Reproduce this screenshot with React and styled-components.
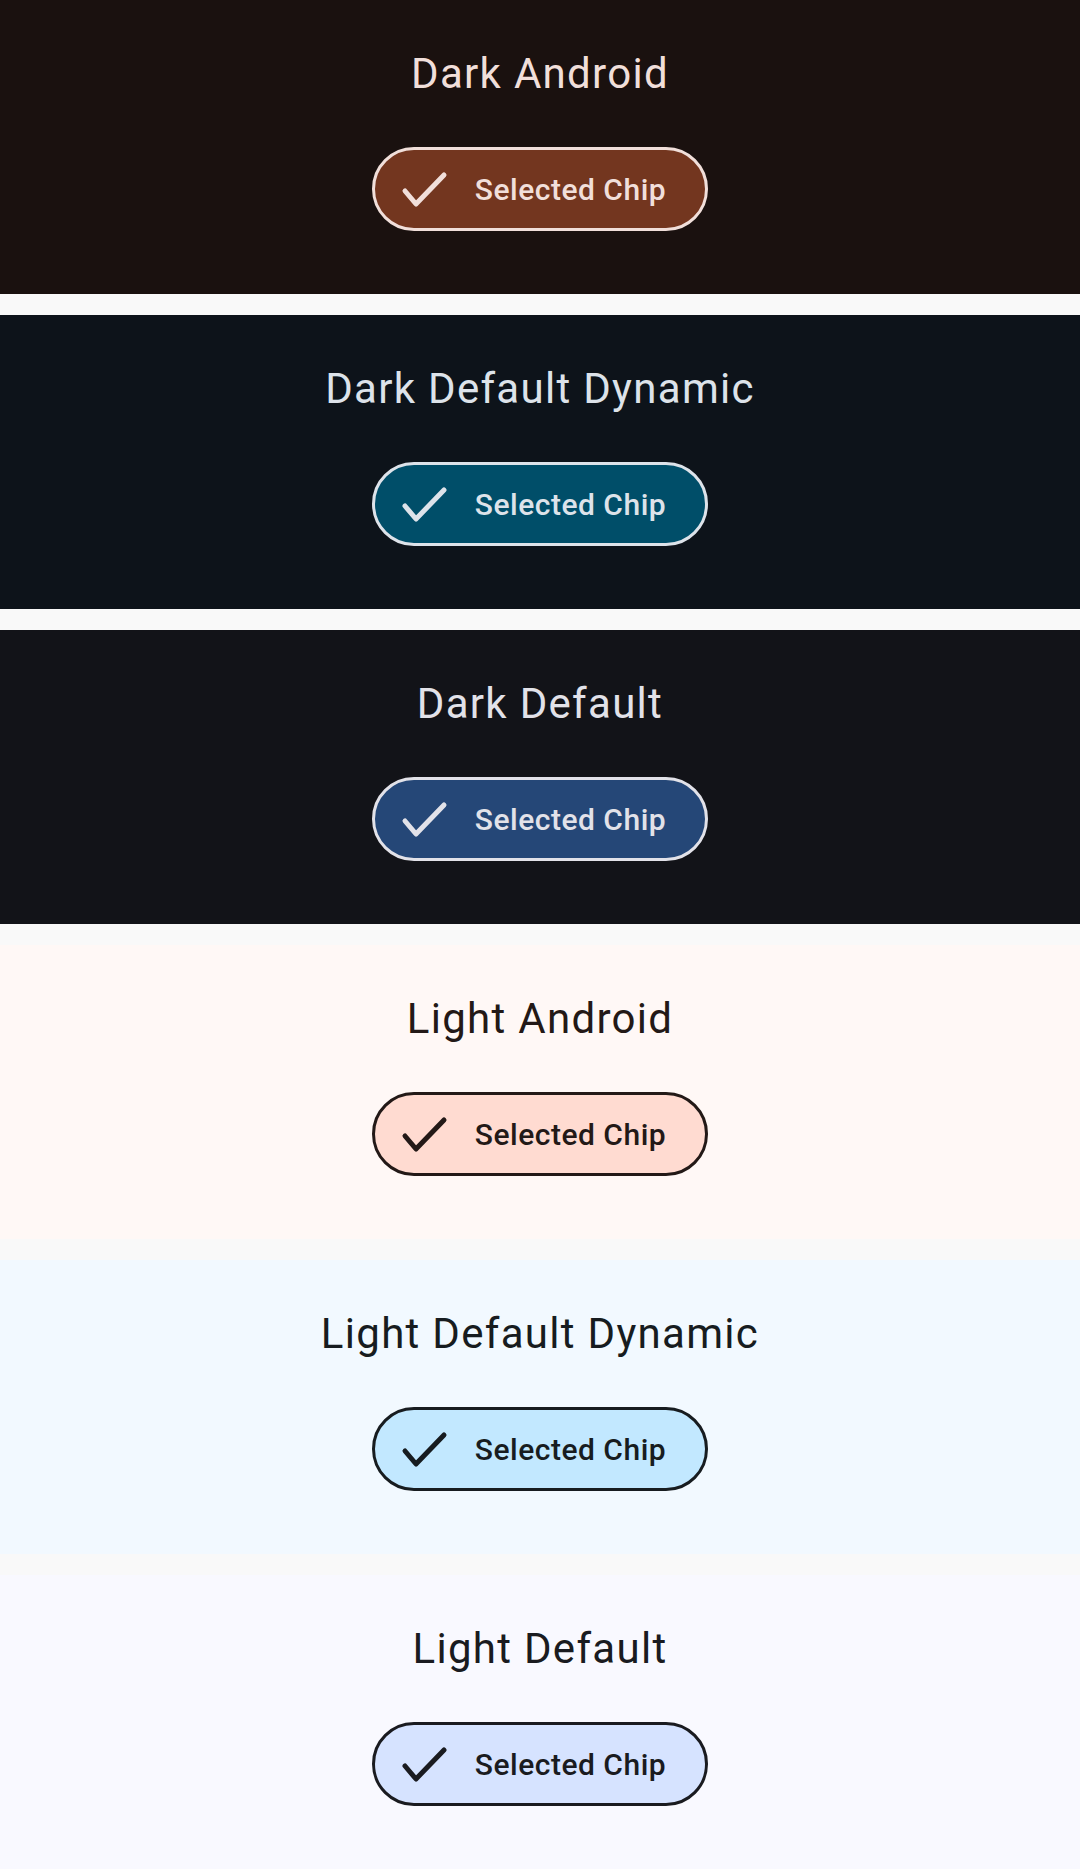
import React from "react";
import styled, { createGlobalStyle } from "styled-components";

const Global = createGlobalStyle`
  html, body { margin: 0; padding: 0; background: #f9f9f9; }
  body { font-family: Roboto, "Noto Sans", sans-serif; }
`;

const Page = styled.div`
  display: flex;
  flex-direction: column;
  gap: 21px;
  background: #f9f9f9;
`;

const Section = styled.section`
  height: 294px;
  box-sizing: border-box;
  padding-top: 49px;
  display: flex;
  flex-direction: column;
  align-items: center;
  gap: 49px;
  background: ${(p) => p.$bg};
`;

const Title = styled.h2`
  margin: 0;
  font-family: Roboto, sans-serif;
  font-weight: 400;
  font-size: 42px;
  line-height: 49px;
  letter-spacing: 1.3px;
  color: ${(p) => p.$fg};
`;

const Chip = styled.div`
  height: 84px;
  box-sizing: border-box;
  display: flex;
  align-items: center;
  gap: 27px;
  padding: 0 39px 0 25px;
  border: 3px solid ${(p) => p.$fg};
  border-radius: 42px;
  background: ${(p) => p.$chip};
  color: ${(p) => p.$fg};
`;

const ChipLabel = styled.span`
  font-family: Roboto, sans-serif;
  font-weight: 500;
  font-size: 30px;
  line-height: 36px;
  letter-spacing: 0.5px;
  padding-top: 1px;
`;

const CheckIcon = styled.svg`
  width: 48px;
  height: 48px;
  flex: none;
  margin-top: 4px;
`;

const themes = [
  { name: "Dark Android", bg: "#1a110f", chip: "#73361f", fg: "#f1dfda" },
  { name: "Dark Default Dynamic", bg: "#0d131a", chip: "#004e69", fg: "#dde3ea" },
  { name: "Dark Default", bg: "#121318", chip: "#254777", fg: "#e2e2e9" },
  { name: "Light Android", bg: "#fff8f6", chip: "#ffdbd1", fg: "#231917" },
  { name: "Light Default Dynamic", bg: "#f2f9ff", chip: "#c2e8ff", fg: "#171c20" },
  { name: "Light Default", bg: "#f9f9ff", chip: "#d6e3ff", fg: "#1a1b20" },
];

function Check() {
  return (
    <CheckIcon viewBox="0 0 48 48">
      <polyline
        points="5,24 16,37 44,8"
        fill="none"
        stroke="currentColor"
        strokeWidth="5"
        strokeLinecap="round"
        strokeLinejoin="round"
      />
    </CheckIcon>
  );
}

export default function App() {
  return (
    <>
      <Global />
      <Page>
        {themes.map((t) => (
          <Section key={t.name} $bg={t.bg}>
            <Title $fg={t.fg}>{t.name}</Title>
            <Chip $chip={t.chip} $fg={t.fg}>
              <Check />
              <ChipLabel>Selected Chip</ChipLabel>
            </Chip>
          </Section>
        ))}
      </Page>
    </>
  );
}
